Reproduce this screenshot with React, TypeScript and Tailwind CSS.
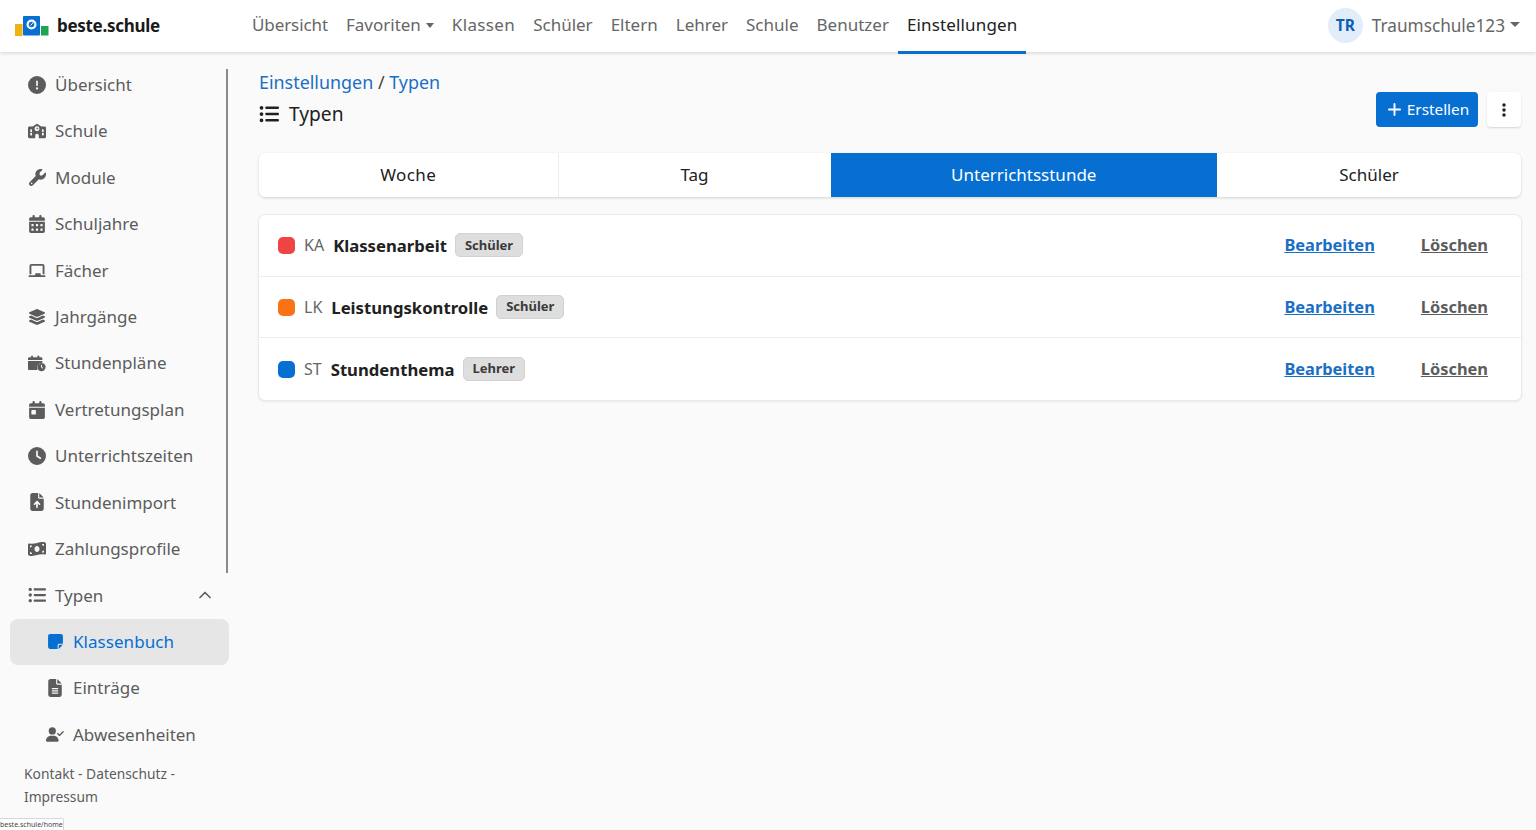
import type { ComponentType, ReactNode } from "react";
import { ChevronUp, Plus } from "lucide-react";
import {
  FaCalendarDay,
  FaCalendarDays,
  FaChalkboard,
  FaCircleExclamation,
  FaClock,
  FaEllipsisVertical,
  FaFileArrowUp,
  FaFileLines,
  FaLayerGroup,
  FaListUl,
  FaMoneyBillWave,
  FaNoteSticky,
  FaSchool,
  FaUserCheck,
  FaWrench,
} from "react-icons/fa6";

const font = { fontFamily: '"Noto Sans", "Open Sans", sans-serif' };

function CalendarClock({ className }: { className?: string }) {
  return (
    <svg viewBox="0 0 20 18" className={className} fill="currentColor">
      <rect x="3.5" y="0" width="2" height="3" rx="1" />
      <rect x="10.5" y="0" width="2" height="3" rx="1" />
      <path d="M0 3.5a1.5 1.5 0 0 1 1.5-1.5h13A1.5 1.5 0 0 1 16 3.5V5H0z" />
      <path d="M0 6.3h16v2a5.5 5.5 0 0 0-5.4 8H1.5A1.5 1.5 0 0 1 0 15z" />
      <circle cx="15" cy="13" r="4.6" />
      <path d="M15 10.5v2.7l1.8 1" stroke="#fafafa" strokeWidth="1.1" fill="none" />
    </svg>
  );
}

function Logo() {
  return (
    <svg viewBox="0 0 34 20" className="w-[34px] h-[20px] shrink-0">
      <rect x="0" y="8" width="7.5" height="12" fill="#eeb211" />
      <rect x="8" y="0" width="17" height="19.5" rx="1" fill="#066fd1" />
      <circle cx="16.5" cy="8.5" r="5" fill="#fff" />
      <circle cx="16.5" cy="8.5" r="2.8" fill="#066fd1" />
      <path d="M15.5 9.5l3.4-3.6" stroke="#fff" strokeWidth="1" />
      <rect x="26" y="10" width="7.5" height="9.5" fill="#1fa355" />
    </svg>
  );
}

type Item = { label: string; icon: ComponentType<{ className?: string }>; size: string };

const items: Item[] = [
  { label: "Übersicht", icon: FaCircleExclamation, size: "w-[18px] h-[18px]" },
  { label: "Schule", icon: FaSchool, size: "w-[19px] h-[16px]" },
  { label: "Module", icon: FaWrench, size: "w-[17px] h-[17px]" },
  { label: "Schuljahre", icon: FaCalendarDays, size: "w-[16px] h-[18px]" },
  { label: "Fächer", icon: FaChalkboard, size: "w-[18px] h-[15px]" },
  { label: "Jahrgänge", icon: FaLayerGroup, size: "w-[18px] h-[18px]" },
  { label: "Stundenpläne", icon: CalendarClock, size: "w-[18px] h-[17px]" },
  { label: "Vertretungsplan", icon: FaCalendarDay, size: "w-[16px] h-[18px]" },
  { label: "Unterrichtszeiten", icon: FaClock, size: "w-[18px] h-[18px]" },
  { label: "Stundenimport", icon: FaFileArrowUp, size: "w-[14px] h-[18px]" },
  { label: "Zahlungsprofile", icon: FaMoneyBillWave, size: "w-[19px] h-[16px]" },
];

const topNav = ["Schüler", "Eltern", "Lehrer", "Schule", "Benutzer"];

const rows = [
  { color: "bg-[#ef4444]", code: "KA", name: "Klassenarbeit", badge: "Schüler" },
  { color: "bg-[#f97316]", code: "LK", name: "Leistungskontrolle", badge: "Schüler" },
  { color: "bg-[#066fd1]", code: "ST", name: "Stundenthema", badge: "Lehrer" },
];

function SideRow({ icon, label, sub, children }: { icon: ReactNode; label: string; sub?: boolean; children?: ReactNode }) {
  return (
    <div className={`h-[46.45px] flex items-center text-[#5c5c5c] ${sub ? "pl-[36px]" : "pl-[18px]"}`}>
      <span className="w-[18px] flex justify-center shrink-0">{icon}</span>
      <span className="ml-[9px]">{label}</span>
      {children}
    </div>
  );
}

export default function App() {
  return (
    <div className="relative h-screen overflow-hidden flex flex-col bg-[#fafafa] text-[17px] text-[#212121]" style={font}>
      <header className="relative z-10 h-[52px] shrink-0 bg-white shadow-[0_1px_4px_rgba(0,0,0,0.16)] flex items-center">
        <div className="pl-[15px] w-[243px] flex items-center gap-[8px] pb-[1px]">
          <Logo />
          <span className="font-bold text-[#1a1a1a] text-[17px] tracking-[-0.3px]">beste.schule</span>
        </div>
        <nav className="flex self-start h-[54px] items-start text-[#666] leading-[50px]">
          <a className="px-[9px] tracking-[-0.1px]">Übersicht</a>
          <a className="px-[9px] h-[50px] flex items-center gap-[5px]">
            Favoriten
            <span className="border-x-[4.5px] border-x-transparent border-t-[5px] border-t-[#666] mt-[1px]" />
          </a>
          <a className="px-[9px] tracking-[0.35px]">Klassen</a>
          {topNav.map((n) => (
            <a key={n} className="px-[9px]">
              {n}
            </a>
          ))}
          <a className="px-[9px] h-[54px] text-[#212121] border-b-[3px] border-[#066fd1] tracking-[0.15px]">Einstellungen</a>
        </nav>
        <div className="ml-auto pr-[16px] pb-[1px] flex items-center text-[#666]">
          <span className="w-[35px] h-[35px] rounded-full bg-[#e1edf9] text-[#0a5fb4] font-bold text-[15.5px] flex items-center justify-center">TR</span>
          <span className="ml-[9px] text-[17.2px]">Traumschule123</span>
          <span className="ml-[5px] mb-[3px] border-x-[5px] border-x-transparent border-t-[5px] border-t-[#666]" />
        </div>
      </header>

      <div className="flex-1 flex min-h-0">
        <aside className="relative w-[259px] shrink-0 pl-[10px] pt-[9.3px]">
          <div className="w-[219px]">
            {items.map((it) => (
              <SideRow key={it.label} label={it.label} icon={<it.icon className={it.size} />} />
            ))}
            <SideRow label="Typen" icon={<FaListUl className="w-[18px] h-[18px]" />}>
              <ChevronUp className="w-[20px] h-[20px] ml-auto mr-[14px]" />
            </SideRow>
            <div className="rounded-[8px] bg-[#e6e6e6]">
              <div className="h-[46.45px] flex items-center text-[#066fd1] pl-[36px]">
                <span className="w-[18px] flex justify-center shrink-0">
                  <FaNoteSticky className="w-[17px] h-[17px]" />
                </span>
                <span className="ml-[9px] tracking-[0.05px]">Klassenbuch</span>
              </div>
            </div>
            <SideRow sub label="Einträge" icon={<FaFileLines className="w-[14px] h-[18px]" />} />
            <SideRow sub label="Abwesenheiten" icon={<FaUserCheck className="w-[18px] h-[15px]" />} />
            <p className="pl-[14px] pt-[4px] text-[13.8px] leading-[23px] text-[#5c5c5c]">
              Kontakt - Datenschutz -<br />
              Impressum
            </p>
          </div>
          <div className="absolute left-[226px] top-[17px] w-[2px] h-[504px] bg-[#8a8a8a]" />
        </aside>

        <main className="flex-1 min-w-0 pr-[15px] pt-[18px]">
          <div className="flex justify-between">
            <div>
              <div className="text-[#1a6fc4] text-[17.9px] leading-[24px]">
                Einstellungen <span className="text-[#444]">/</span> Typen
              </div>
              <h1 className="mt-[8px] flex items-center text-[#212121] text-[19.2px] leading-[24px]">
                <FaListUl className="w-[20px] h-[20px] mr-[10px]" />
                Typen
              </h1>
            </div>
            <div className="flex gap-[9px] mt-[22px] items-start">
              <button className="h-[35px] w-[102px] rounded-[4px] bg-[#066fd1] text-white text-[15.3px] flex items-center justify-center gap-[3px]">
                <Plus className="w-[19px] h-[19px]" strokeWidth={2.4} />
                Erstellen
              </button>
              <button className="h-[35px] w-[34px] rounded-[4px] bg-white shadow-[0_1px_2px_rgba(0,0,0,0.15)] flex items-center justify-center text-[#212121]">
                <FaEllipsisVertical className="w-[16px] h-[16px]" />
              </button>
            </div>
          </div>

          <div className="mt-[26px] h-[44px] rounded-[6px] bg-white shadow-[0_1px_3px_rgba(0,0,0,0.16)] grid grid-cols-[299.5px_272px_386.5px_1fr] overflow-hidden text-center leading-[44px] text-[#212121]">
            <div className="border-r border-[#ececec] tracking-[0.4px]">Woche</div>
            <div>Tag</div>
            <div className="bg-[#066fd1] text-white">Unterrichtsstunde</div>
            <div>Schüler</div>
          </div>

          <div className="mt-[18px] rounded-[6px] bg-white shadow-[0_0_0_1px_#ebebeb,0_1px_3px_rgba(0,0,0,0.16)] divide-y divide-[#ececec]">
            {rows.map((r) => (
              <div key={r.code} className="h-[61.7px] flex items-center pl-[19px] pr-[33px]">
                <span className={`w-[17px] h-[17px] rounded-[5px] ${r.color}`} />
                <span className="ml-[9px] text-[#666] text-[16px]">{r.code}</span>
                <span className="ml-[9px] font-bold text-[16.7px] text-[#212121]">{r.name}</span>
                <span className="ml-[8px] h-[24px] px-[9px] rounded-[5px] bg-[#dedede] border border-[#d2d2d2] text-[13px] font-bold text-[#3a3a3a] flex items-center">{r.badge}</span>
                <a className="ml-auto font-bold text-[16.4px] underline text-[#1a6fc4]">Bearbeiten</a>
                <a className="ml-[46px] font-bold text-[16.4px] underline text-[#5c5c5c]">Löschen</a>
              </div>
            ))}
          </div>
        </main>
      </div>

      <div className="absolute left-0 bottom-0 h-[12px] bg-white border-t border-r border-[#d8d8d8] rounded-tr-[2px] text-[7px] leading-[11px] text-[#444]">beste.schule/home</div>
    </div>
  );
}
